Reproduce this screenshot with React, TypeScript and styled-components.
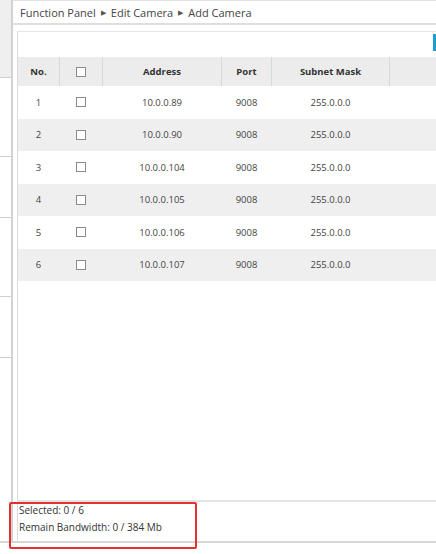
import React from "react"
import styled, { createGlobalStyle } from "styled-components"

const GlobalStyle = createGlobalStyle`
  body {
    margin: 0;
    background: #ffffff;
    font-family: "Open Sans", "Noto Sans", sans-serif;
    color: #3a3a3a;
  }
`

const Page = styled.div`
  width: 436px;
  height: 554px;
  display: flex;
  flex-direction: column;
  overflow: hidden;
  position: relative;
  background: #fff;
`

const Body = styled.div`
  height: 543px;
  display: flex;
  border-bottom: 2px solid #d6d6d6;
  box-sizing: border-box;
`

const Sidebar = styled.div`
  width: 11px;
  flex-shrink: 0;
  border-right: 2px solid #d2d2d2;
  display: flex;
  flex-direction: column;
`

const SideItem = styled.div<{ $h: number; $active?: boolean }>`
  height: ${(p) => p.$h}px;
  flex-shrink: 0;
  box-sizing: border-box;
  border-bottom: 1px solid #cfcfcf;
  background: ${(p) => (p.$active ? "#efefef" : "#fff")};
`

const Main = styled.div`
  flex: 1;
  min-width: 0;
  display: flex;
  flex-direction: column;
`

const Breadcrumb = styled.div`
  height: 25px;
  box-sizing: border-box;
  border-top: 1px solid #e2e2e2;
  border-bottom: 2px solid #dedede;
  padding-left: 7px;
  display: flex;
  align-items: center;
  font-size: 11px;
  color: #444;
  white-space: nowrap;
`

const Arrow = styled.span`
  font-size: 7px;
  margin: 0 5px;
  color: #555;
`

const Panel = styled.div`
  flex: 1;
  margin: 6px 0 0 4px;
  border-left: 1px solid #dcdcdc;
  border-top: 1px solid #e6e6e6;
  display: flex;
  flex-direction: column;
  min-height: 0;
`

const Toolbar = styled.div`
  height: 25px;
  display: flex;
  justify-content: flex-end;
  align-items: flex-start;
  padding-top: 2px;
  box-sizing: border-box;
`

const ToolButton = styled.div`
  width: 10px;
  height: 17px;
  background: #1c9fd0;
  margin-right: -7px;
`

const Table = styled.div`
  display: flex;
  flex-direction: column;
`

const Row = styled.div<{ $head?: boolean; $shade?: boolean }>`
  display: grid;
  grid-template-columns: 42px 43px 119px 50px 118px 100px;
  height: ${(p) => (p.$head ? "29px" : "32.5px")};
  background: ${(p) => (p.$head ? "#ececec" : p.$shade ? "#efefef" : "#fff")};
  font-size: 9.5px;
  font-weight: ${(p) => (p.$head ? 700 : 400)};
  color: ${(p) => (p.$head ? "#333" : "#444")};
`

const Cell = styled.div<{ $head?: boolean }>`
  display: flex;
  align-items: center;
  justify-content: center;
  border-right: 1px solid ${(p) => (p.$head ? "#d8d8d8" : "transparent")};
  white-space: nowrap;
`

const Box = styled.span`
  width: 8px;
  height: 8px;
  border: 1px solid #8a8a8a;
  background: #fff;
`

const Spacer = styled.div`
  flex: 1;
`

const Footer = styled.div`
  height: 41px;
  box-sizing: border-box;
  border-top: 2px solid #e4e4e4;
  padding: 0 0 0 1px;
  font-size: 10px;
  color: #333;
  line-height: 17px;
`

const Highlight = styled.div`
  position: absolute;
  left: 9px;
  top: 502px;
  width: 188px;
  height: 47px;
  box-sizing: border-box;
  border: 2px solid #e5312e;
  border-radius: 2px;
`

const BottomStrip = styled.div`
  flex: 1;
`

const cameras = [
  { no: 1, address: "10.0.0.89", port: 9008, mask: "255.0.0.0" },
  { no: 2, address: "10.0.0.90", port: 9008, mask: "255.0.0.0" },
  { no: 3, address: "10.0.0.104", port: 9008, mask: "255.0.0.0" },
  { no: 4, address: "10.0.0.105", port: 9008, mask: "255.0.0.0" },
  { no: 5, address: "10.0.0.106", port: 9008, mask: "255.0.0.0" },
  { no: 6, address: "10.0.0.107", port: 9008, mask: "255.0.0.0" },
]

const sideItems = [
  { h: 78, active: true },
  { h: 79 },
  { h: 61 },
  { h: 79 },
  { h: 61 },
]

export default function App() {
  return (
    <Page>
      <GlobalStyle />
      <Body>
        <Sidebar>
          {sideItems.map((s, i) => (
            <SideItem key={i} $h={s.h} $active={s.active} />
          ))}
        </Sidebar>
        <Main>
          <Breadcrumb>
            Function Panel<Arrow>▶</Arrow>Edit Camera<Arrow>▶</Arrow>Add Camera
          </Breadcrumb>
          <Panel>
            <Toolbar>
              <ToolButton />
            </Toolbar>
            <Table>
              <Row $head>
                <Cell $head>No.</Cell>
                <Cell $head>
                  <Box />
                </Cell>
                <Cell $head>Address</Cell>
                <Cell $head>Port</Cell>
                <Cell $head>Subnet Mask</Cell>
                <Cell $head></Cell>
              </Row>
              {cameras.map((c, i) => (
                <Row key={c.no} $shade={i % 2 === 1}>
                  <Cell>{c.no}</Cell>
                  <Cell>
                    <Box />
                  </Cell>
                  <Cell>{c.address}</Cell>
                  <Cell>{c.port}</Cell>
                  <Cell>{c.mask}</Cell>
                  <Cell></Cell>
                </Row>
              ))}
            </Table>
            <Spacer />
            <Footer>
              <div>Selected: 0 / 6</div>
              <div>Remain Bandwidth: 0 / 384 Mb</div>
            </Footer>
          </Panel>
        </Main>
      </Body>
      <BottomStrip />
      <Highlight />
    </Page>
  )
}
